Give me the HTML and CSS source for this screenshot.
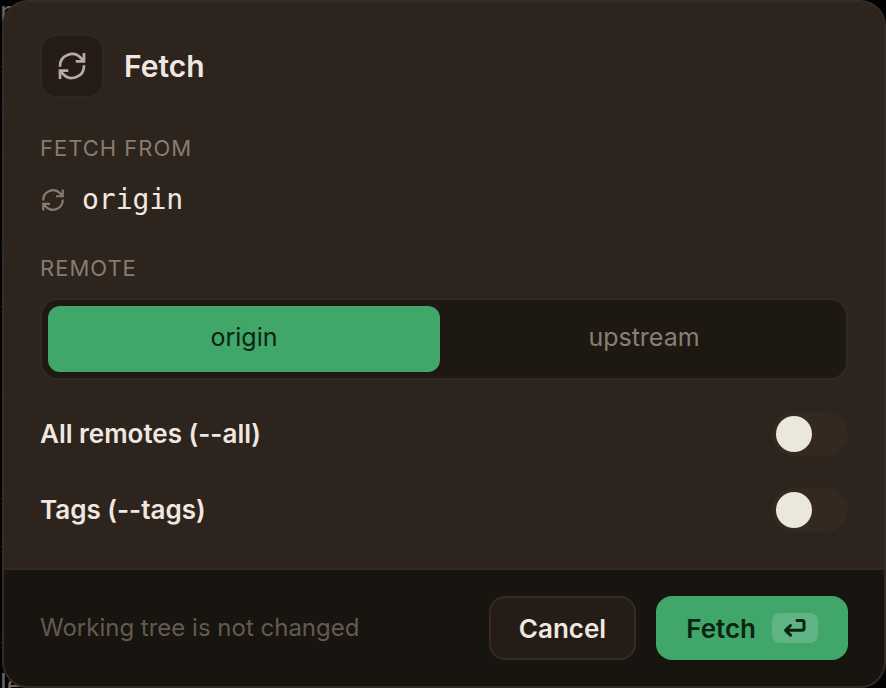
FILE: index.html
```html
<!DOCTYPE html>
<html lang="en">
<head>
    <meta charset="UTF-8">
    <meta name="viewport" content="width=device-width, initial-scale=1.0">
    <title>Fetch</title>
    <link rel="stylesheet" href="styles.css">
</head>
<body>
    <div class="backdrop" aria-hidden="true">
        <span>n</span>
        <span>s</span>
        <span>n</span>
        <span>-</span>
        <span></span>
        <span>i</span>
        <span>s</span>
        <span></span>
        <span>-</span>
        <span></span>
        <span>s</span>
        <span>s</span>
        <span></span>
        <span>s</span>
        <span>le</span>
    </div>

    <form class="dialog" role="dialog" aria-labelledby="dialog-title">
        <div class="dialog-body">
            <header class="dialog-header">
                <span class="header-icon">
                    <svg class="icon-large" viewBox="0 0 24 24" aria-hidden="true">
                        <path d="M3 12.5v-.5a9 9 0 0 1 15.5-6.2L21 8.3M21 2.2v6.3h-6.2M21 11.5v.5a9 9 0 0 1-15.5 6.2L3 15.7M3 21.8v-6.3h6.2"/>
                    </svg>
                </span>
                <h1 id="dialog-title">Fetch</h1>
            </header>

            <section class="source">
                <h2 class="section-label">FETCH FROM</h2>
                <p class="source-name">
                    <svg class="icon-small" viewBox="0 0 24 24" aria-hidden="true">
                        <path d="M3 12.5v-.5a9 9 0 0 1 15.5-6.2L21 8.3M21 2.2v6.3h-6.2M21 11.5v.5a9 9 0 0 1-15.5 6.2L3 15.7M3 21.8v-6.3h6.2"/>
                    </svg>
                    <span>origin</span>
                </p>
            </section>

            <section class="remote">
                <h2 class="section-label">REMOTE</h2>
                <div class="segmented">
                    <button type="button" class="segment active" aria-pressed="true">origin</button>
                    <button type="button" class="segment" aria-pressed="false">upstream</button>
                </div>
            </section>

            <div class="options">
                <div class="option">
                    <label for="all-remotes">All remotes (--all)</label>
                    <input type="checkbox" class="toggle" id="all-remotes">
                </div>
                <div class="option">
                    <label for="tags">Tags (--tags)</label>
                    <input type="checkbox" class="toggle" id="tags">
                </div>
            </div>
        </div>

        <footer class="dialog-footer">
            <p class="hint">Working tree is not changed</p>
            <button type="button" class="btn btn-cancel">Cancel</button>
            <button type="submit" class="btn btn-primary">
                Fetch
                <kbd>
                    <svg viewBox="0 0 24 20" aria-hidden="true">
                        <path d="M14 2.5h5a2 2 0 0 1 2 2v5.8a2 2 0 0 1-2 2H3M7.5 7.5l-5 4.8 5 4.8"/>
                    </svg>
                </kbd>
            </button>
        </footer>
    </form>
</body>
</html>
```

FILE: styles.css
```css
* {
    box-sizing: border-box;
}
body {
    margin: 0;
    padding-left: 2px;
    min-height: 100vh;
    display: flex;
    background-color: #040303;
    font-family: Inter, "Liberation Sans", sans-serif;
    color: #f0e8e0;
    overflow: hidden;
}
h1, h2, p {
    margin: 0;
}
.backdrop {
    position: absolute;
    left: 0;
    top: -12px;
    display: flex;
    flex-direction: column;
    font-size: 28px;
    color: #6a6663;
}
.backdrop span {
    height: 48px;
    line-height: 48px;
}
.dialog {
    position: relative;
    flex: 1;
    display: flex;
    flex-direction: column;
    border: 2px solid #352b25;
    border-radius: 26px;
    background-color: #2e241e;
    overflow: hidden;
}
.dialog-body {
    flex: 1;
    padding: 32px 36px 36px;
}
.dialog-header {
    display: flex;
    align-items: center;
    gap: 20px;
}
.header-icon {
    display: flex;
    align-items: center;
    justify-content: center;
    width: 64px;
    height: 64px;
    border: 2px solid #30271f;
    border-radius: 16px;
    background-color: #261c17;
}
svg {
    display: block;
    fill: none;
    stroke: currentColor;
}
.icon-large {
    width: 32px;
    height: 32px;
    color: #b8aca0;
    stroke-width: 2;
}
.icon-small {
    width: 26px;
    height: 26px;
    stroke-width: 2;
    color: #887c70;
}
h1 {
    font-size: 30px;
    line-height: 36px;
    font-weight: 600;
}
.source {
    margin-top: 36px;
}
.section-label {
    font-size: 22px;
    line-height: 28px;
    font-weight: 400;
    letter-spacing: 1px;
    color: #887c70;
}
.source-name {
    display: flex;
    align-items: center;
    gap: 16px;
    margin-top: 20px;
    font-family: "DejaVu Sans Mono", monospace;
    font-size: 28px;
    line-height: 36px;
}
.remote {
    margin-top: 36px;
}
.segmented {
    display: grid;
    grid-template-columns: 1fr 1fr;
    gap: 8px;
    margin-top: 16px;
    padding: 6px;
    border: 2px solid #302822;
    border-radius: 18px;
    background-color: #1e1813;
}
.segment {
    height: 66px;
    padding: 0 0 4px;
    border: none;
    border-radius: 12px;
    background: none;
    font-family: inherit;
    font-size: 25px;
    color: #8a7e72;
    cursor: pointer;
}
.segment.active {
    background-color: #40a66a;
    color: #0a2412;
}
.options {
    display: flex;
    flex-direction: column;
    gap: 32px;
    margin-top: 32px;
}
.option {
    display: flex;
    align-items: center;
    justify-content: space-between;
    font-size: 26px;
    line-height: 32px;
    font-weight: 600;
}
.toggle {
    appearance: none;
    width: 76px;
    height: 44px;
    margin: 0;
    padding: 4px;
    border-radius: 22px;
    background-color: #342921;
    cursor: pointer;
}
.toggle::before {
    content: "";
    display: block;
    width: 36px;
    height: 36px;
    border-radius: 50%;
    background-color: #ebe7dc;
}
.toggle:checked {
    background-color: #40a66a;
}
.toggle:checked::before {
    margin-left: auto;
}
.dialog-footer {
    display: flex;
    align-items: center;
    gap: 20px;
    padding: 26px 36px;
    border-top: 2px solid #322922;
    background-color: #18140f;
}
.hint {
    flex: 1;
    font-size: 24px;
    line-height: 32px;
    color: #645a50;
}
.btn {
    display: flex;
    align-items: center;
    height: 64px;
    border: none;
    border-radius: 16px;
    font-family: inherit;
    font-size: 26px;
    font-weight: 600;
    cursor: pointer;
}
.btn-cancel {
    padding: 0 28px;
    border: 2px solid #352b25;
    background-color: #261c17;
    color: #f0e8e0;
}
.btn-primary {
    gap: 16px;
    padding: 0 30px;
    background-color: #40a66a;
    color: #0a2412;
}
kbd {
    display: flex;
    align-items: center;
    justify-content: center;
    width: 46px;
    height: 30px;
    border-radius: 8px;
    background-color: #60b483;
}
kbd svg {
    width: 24px;
    height: 20px;
    stroke-width: 3;
    stroke-linecap: round;
    stroke-linejoin: round;
}
```
